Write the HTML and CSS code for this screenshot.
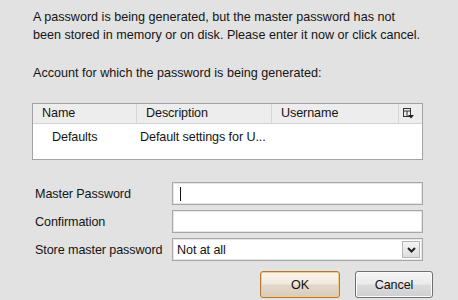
FILE: index.html
```html
<!DOCTYPE html>
<html>
<head>
<meta charset="utf-8">
<link rel="stylesheet" href="styles.css">
</head>
<body>
<div class="dialog">
  <p class="msg">A password is being generated, but the master password has not<br>been stored in memory or on disk. Please enter it now or click cancel.</p>
  <p class="account">Account for which the password is being generated:</p>
  <div class="list">
    <div class="list-head">
      <div class="col c1">Name</div>
      <div class="col c2">Description</div>
      <div class="col c3">Username</div>
      <div class="col c4">
        <svg width="11" height="11" viewBox="0 0 11 11">
          <rect x="0.5" y="0.5" width="7" height="8" fill="none" stroke="#333"/>
          <line x1="0.5" y1="3" x2="7.5" y2="3" stroke="#333"/>
          <line x1="4" y1="3" x2="4" y2="8.5" stroke="#333"/>
          <path d="M5 7 h6 l-3 3.5 z" fill="#222"/>
        </svg>
      </div>
    </div>
    <div class="list-row">
      <div class="cell r1">Defaults</div>
      <div class="cell r2">Default settings for U...</div>
    </div>
  </div>
  <div class="form">
    <label class="lbl">Master Password</label>
    <div class="field"><span class="caret"></span></div>
    <label class="lbl">Confirmation</label>
    <div class="field"></div>
    <label class="lbl">Store master password</label>
    <div class="field select"><span class="sel-text">Not at all</span><span class="sel-btn"><svg width="9" height="6" viewBox="0 0 9 6"><path d="M1 1 L4.5 4.5 L8 1" fill="none" stroke="#222" stroke-width="2"/></svg></span></div>
  </div>
  <div class="buttons">
    <button class="btn ok">OK</button>
    <button class="btn cancel">Cancel</button>
  </div>
</div>
</body>
</html>
```

FILE: styles.css
```css
html, body {
  margin: 0;
  padding: 0;
  background: #e2e2e2;
}
body {
  width: 458px;
  height: 300px;
  overflow: hidden;
  font-family: "Liberation Sans", Arial, sans-serif;
  font-size: 12.6px;
  letter-spacing: -0.1px;
  color: #141414;
}
.dialog {
  padding: 8px 0 0 33px;
}
.msg {
  margin: 0;
  line-height: 18px;
  letter-spacing: 0;
}
.account {
  margin: 20px 0 0 0;
  line-height: 18px;
  letter-spacing: 0;
}
.list {
  margin: 21px 0 0 -1px;
  width: 389px;
  height: 55px;
  border: 1px solid #a3a3a3;
  background: #fff;
}
.list-head {
  display: flex;
  height: 19px;
  background: #ededed;
  border-bottom: 1px solid #d2d2d2;
  line-height: 19px;
}
.col {
  padding-left: 9px;
  border-right: 1px solid #d6d6d6;
  box-sizing: border-box;
}
.c1 { width: 104px; }
.c2 { width: 135px; }
.c3 { width: 127px; }
.c4 {
  border-right: none;
  padding-left: 4px;
  display: flex;
  align-items: center;
}
.list-row {
  display: flex;
  line-height: 26px;
}
.r1 { width: 88px; padding-left: 19px; }
.form {
  margin-top: 22px;
  display: grid;
  grid-template-columns: 139px 251px;
  grid-auto-rows: 23px;
  row-gap: 5px;
  align-items: center;
}
.lbl {
  padding-left: 2px;
}
.field {
  height: 23px;
  box-sizing: border-box;
  border: 1px solid #a8a8a8;
  box-shadow: inset 0 0 0 1px #e6e6e6;
  background: #fff;
  display: flex;
  align-items: center;
}
.caret {
  margin-left: 7px;
  width: 1px;
  height: 14px;
  background: #111;
}
.sel-text {
  padding-left: 4px;
  flex: 1;
}
.sel-btn {
  width: 18px;
  height: 17px;
  margin-right: 2px;
  box-sizing: border-box;
  border: 1px solid #b5b5b5;
  background: linear-gradient(#f4f4f4, #dedede);
  display: flex;
  align-items: center;
  justify-content: center;
}
.buttons {
  display: flex;
  gap: 15px;
  margin-top: 10px;
  margin-left: 227px;
}
.btn {
  height: 27px;
  box-sizing: border-box;
  font-family: "Liberation Sans", Arial, sans-serif;
  font-size: 12.6px;
  letter-spacing: -0.1px;
  color: #111;
  border-radius: 3px;
  padding: 0;
}
.ok {
  width: 80px;
  border: 1px solid #b47a34;
  background: linear-gradient(#fbf6ef 0%, #f1e9de 48%, #e2d7c8 52%, #d9cebe 100%);
  box-shadow: inset 0 0 0 1px #f3c98e;
}
.cancel {
  width: 78px;
  border: 1px solid #707070;
  background: linear-gradient(#f4f4f4 0%, #ebebeb 48%, #dcdcdc 52%, #cfcfcf 100%);
  box-shadow: inset 0 0 0 1px #fbfbfb;
}
```
